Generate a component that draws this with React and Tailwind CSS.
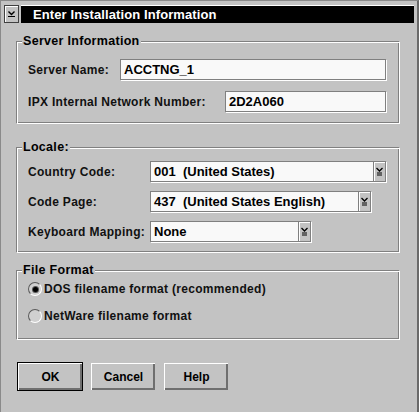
import React from 'react';

const DropArrow = () => (
  <svg width="7" height="9" viewBox="0 0 7 9" className="block">
    <path d="M0.5 1 L3.5 4 L6.5 1" fill="none" stroke="#000" strokeWidth="1.3" />
    <line x1="1" y1="6" x2="6" y2="6" stroke="#000" strokeWidth="1" />
    <line x1="1" y1="8" x2="6" y2="8" stroke="#000" strokeWidth="1" />
  </svg>
);

const Group = ({ title, children, className = '' }) => (
  <fieldset
    className={`border border-t-[#808080] border-l-[#808080] border-b-white border-r-white shadow-[inset_1px_1px_0_white,inset_-1px_-1px_0_#808080] pl-[11px] pr-[13px] ${className}`}
  >
    <legend className="-ml-[6px] px-[1px] bg-[#c3c3c3] text-[12.5px] leading-[14px] font-bold tracking-[0.3px]">{title}</legend>
    {children}
  </fieldset>
);

const TextBox = ({ value, width }) => (
  <div
    className={`${width} h-[21px] border border-[#808080] shadow-[1px_1px_0_white] bg-[#f9f9f9] flex items-center pl-[3px] text-[13px] font-bold text-black`}
  >
    {value}
  </div>
);

const Combo = ({ value, width }) => (
  <div
    className={`${width} h-[21px] border border-[#808080] shadow-[1px_1px_0_white] bg-[#f9f9f9] flex items-stretch text-[13px] font-bold`}
  >
    <div className="flex-1 flex items-center pl-[3px] whitespace-pre">{value}</div>
    <div className="w-[12px] bg-[#c3c3c3] border-l border-[#808080] flex items-center justify-center shadow-[inset_1px_1px_0_white]">
      <DropArrow />
    </div>
  </div>
);

const Label = ({ children, className = '' }) => (
  <span className={`text-[12px] font-bold tracking-[0.3px] text-[#111] ${className}`}>{children}</span>
);

const Row = ({ label, children, className = '' }) => (
  <div className={`flex items-center ${className}`}>
    <Label className="flex-1">{label}</Label>
    {children}
  </div>
);

const Radio = ({ checked, label, className = '' }) => (
  <div className={`flex items-center gap-[2px] ${className}`}>
    <div className="w-[14px] h-[14px] rounded-full border border-t-[#5a5a5a] border-l-[#5a5a5a] border-b-white border-r-white bg-[#d0d0d0] flex items-center justify-center">
      {checked && <div className="w-[5px] h-[5px] rounded-full bg-black shadow-[0_0_0_1px_#555]" />}
    </div>
    <Label>{label}</Label>
  </div>
);

const Button = ({ children, isDefault }) => (
  <div className={isDefault ? 'border border-black' : 'p-[1px]'}>
    <div className="w-[64px] h-[27px] bg-[#c3c3c3] border-t border-l border-white shadow-[inset_-2px_-2px_0_#6f6f6f] flex items-center justify-center text-[12px] font-bold">
      {children}
    </div>
  </div>
);

export default function App() {
  return (
    <div className="w-[419px] h-[412px] bg-[#c3c3c3] border-l border-t border-[#8a8a8a] border-r-2 border-r-[#6a6a6a] overflow-hidden font-['Liberation_Sans',Arial,sans-serif] text-black select-none">
      {/* Title bar */}
      <div className="flex h-[18px] mt-[4px] ml-[3px] mr-[3px] gap-[2px]">
        <div className="w-[15px] border border-[#404040] bg-[#c3c3c3] shadow-[inset_1px_1px_0_white] flex items-center justify-center">
          <svg width="9" height="8" viewBox="0 0 9 8">
            <path d="M1.5 1.5 L4.5 4.5 L7.5 1.5" fill="none" stroke="#000" strokeWidth="1.4" />
            <line x1="1" y1="6.5" x2="8" y2="6.5" stroke="#000" strokeWidth="1" />
          </svg>
        </div>
        <div className="flex-1 bg-black border-t border-white flex items-center pl-[12px] text-white text-[13px] font-bold tracking-[0.1px]">
          Enter Installation Information
        </div>
      </div>

      <div className="pl-[15px] pr-[17px]">
        <Group title="Server Information" className="mt-[11px] pt-[11px] pb-[11px]">
          <Row label="Server Name:">
            <TextBox value="ACCTNG_1" width="w-[266px]" />
          </Row>
          <Row label="IPX Internal Network Number:" className="mt-[11px]">
            <TextBox value="2D2A060" width="w-[161px]" />
          </Row>
        </Group>

        <Group title="Locale:" className="mt-[16px] pt-[7px] pb-[10px]">
          <Row label="Country Code:">
            <Combo value="001  (United States)" width="w-[236px]" />
          </Row>
          <div className="flex items-center mt-[9px]">
            <Label className="w-[122px]">Code Page:</Label>
            <Combo value="437  (United States English)" width="w-[221px]" />
          </div>
          <div className="flex items-center mt-[9px]">
            <Label className="w-[122px]">Keyboard Mapping:</Label>
            <Combo value="None" width="w-[161px]" />
          </div>
        </Group>

        <Group title="File Format" className="mt-[10px] pt-[3px] pb-[14px]">
          <Radio checked label="DOS filename format (recommended)" />
          <Radio label="NetWare filename format" className="mt-[9px]" />
        </Group>

        <div className="flex gap-[7px] mt-[22px] ml-[1px]">
          <Button isDefault>OK</Button>
          <Button>Cancel</Button>
          <Button>Help</Button>
        </div>
      </div>
    </div>
  );
}
